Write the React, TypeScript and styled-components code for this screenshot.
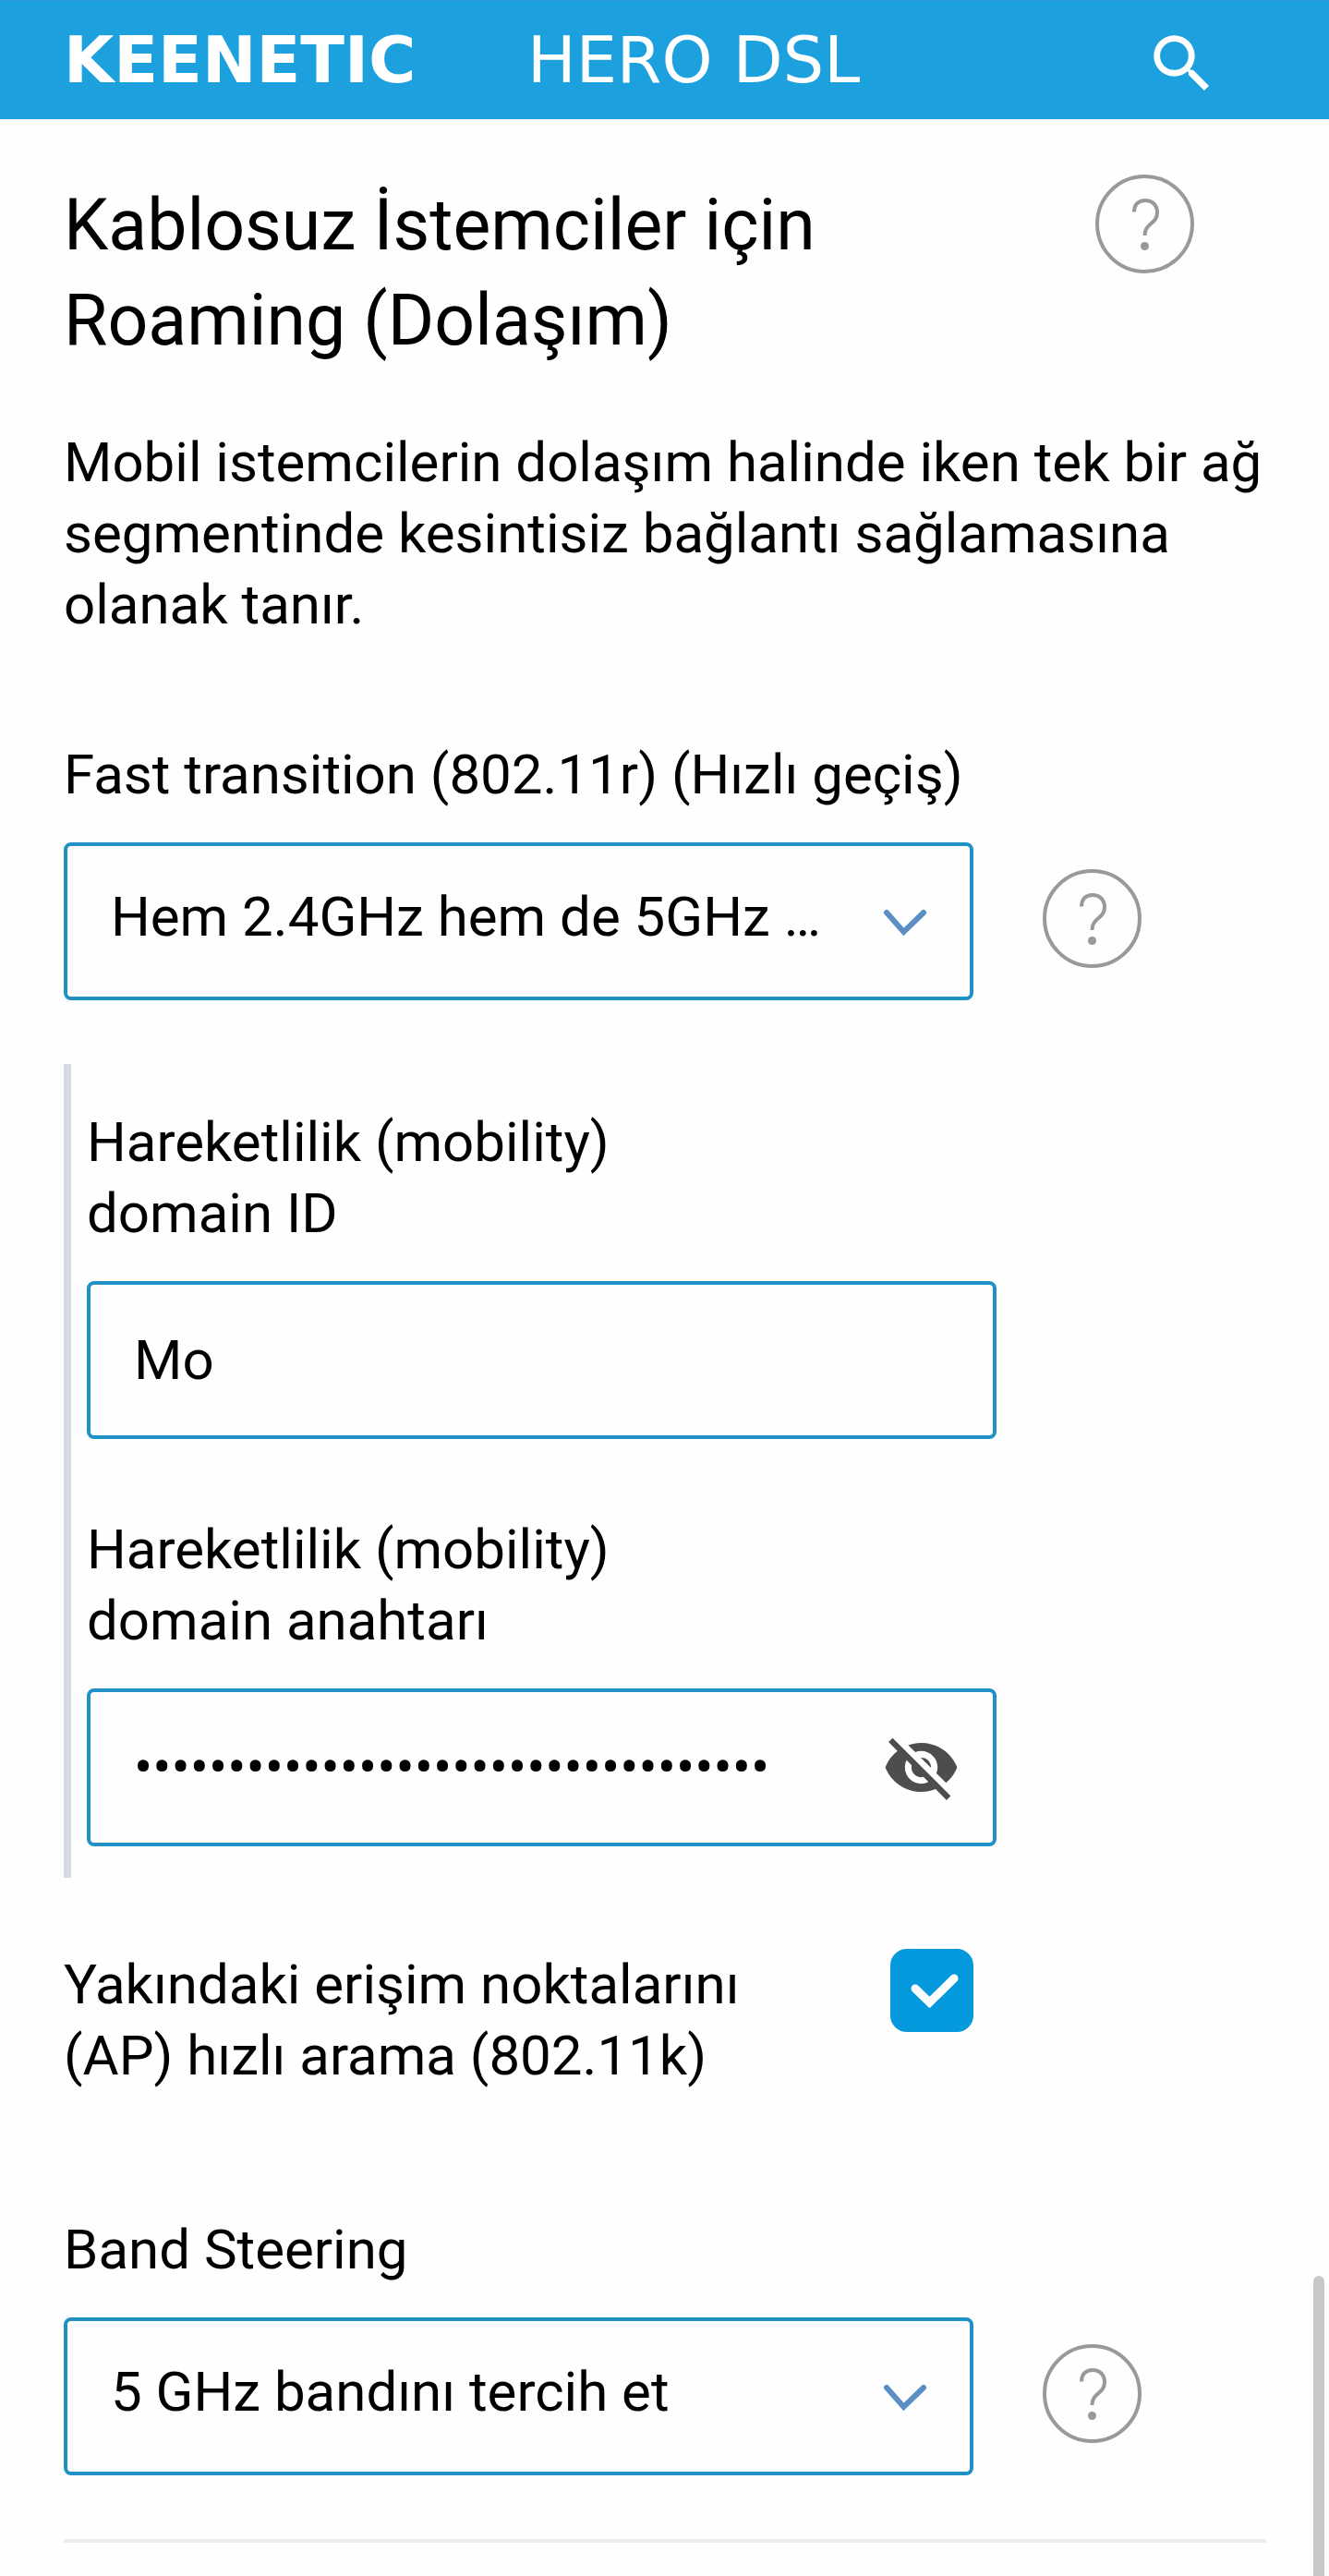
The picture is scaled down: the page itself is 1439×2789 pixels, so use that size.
import React, { useState } from "react";
import styled, { createGlobalStyle } from "styled-components";
import { MdSearch, MdVisibilityOff, MdVisibility } from "react-icons/md";

const GlobalStyle = createGlobalStyle`
  *, *::before, *::after { box-sizing: border-box; }
  html { scrollbar-width: none; }
  body {
    margin: 0;
    background: #fefefe;
    color: #000;
    font-family: Roboto, "Liberation Sans", sans-serif;
    font-size: 60px;
    line-height: 77px;
  }
`;

const Header = styled.header`
  display: flex;
  align-items: center;
  justify-content: space-between;
  height: 129px;
  padding: 0 118px 0 69px;
  background: #1ca0de;
  border-top: 1px solid #2e97d2;
`;

const Brand = styled.a`
  display: grid;
  grid-template-columns: 502px auto;
  color: #fff;
  font-family: "DejaVu Sans", Roboto, sans-serif;
  font-size: 70px;
  text-decoration: none;
  white-space: nowrap;
`;

const Maker = styled.span`
  font-weight: 700;
`;

const Model = styled.span`
  font-weight: 400;
`;

const IconButton = styled.button`
  display: flex;
  flex: none;
  padding: 0;
  border: 0;
  background: none;
  color: inherit;
  cursor: pointer;
`;

const SearchButton = styled(IconButton)`
  padding-top: 8px;
  color: #fff;
`;

const HelpCircle = styled(IconButton)`
  padding-bottom: 6px;
`;

const RevealButton = styled(IconButton)`
  position: absolute;
  top: 43px;
  right: 39px;
  color: #4d4d4d;
`;

const Main = styled.main`
  padding: 60px 68px 35px 69px;
`;

const TitleRow = styled.div`
  display: flex;
  align-items: flex-start;
  justify-content: space-between;
  gap: 75px;
  padding-right: 78px;
`;

const Title = styled.h1`
  margin: 0;
  padding-top: 4px;
  font-size: 77px;
  font-weight: 400;
  line-height: 103px;
`;

const Description = styled.p`
  margin: 63px 0 107px;
`;

const Field = styled.div`
  display: flex;
  flex-direction: column;
  gap: 35px;
`;

const Label = styled.label`
  max-width: 740px;
`;

const WideLabel = styled.label``;

const ControlRow = styled.div`
  display: flex;
  align-items: center;
  gap: 75px;
`;

const ControlBox = styled.div`
  position: relative;
  width: 100%;
  max-width: 985px;
`;

const Select = styled.select`
  display: block;
  width: 100%;
  height: 171px;
  padding: 0 130px 10px 47px;
  border: 4px solid #1f91c4;
  border-radius: 8px;
  background: #fefefe;
  color: #000;
  font: inherit;
  appearance: none;
  text-overflow: ellipsis;
`;

const Input = styled.input`
  display: block;
  width: 100%;
  height: 171px;
  padding: 0 130px 0 47px;
  border: 4px solid #1f91c4;
  border-radius: 8px;
  background: #fefefe;
  color: #000;
  font: inherit;
`;

const Chevron = styled.svg`
  position: absolute;
  top: 71px;
  right: 49px;
  width: 51px;
  height: 32px;
  pointer-events: none;
`;

const DomainGroup = styled.section`
  display: flex;
  flex-direction: column;
  gap: 81px;
  margin: 69px 0 77px;
  padding: 46px 0 34px 17px;
  border-left: 8px solid #d6dbe3;
`;

const CheckRow = styled.div`
  display: flex;
  align-items: flex-start;
  gap: 75px;
  max-width: 985px;
  margin-bottom: 133px;
`;

const CheckLabel = styled.label`
  flex: 1;
`;

const CheckWrap = styled.span`
  display: grid;
  flex: none;
`;

const Checkbox = styled.input`
  grid-area: 1 / 1;
  width: 90px;
  height: 90px;
  margin: 0;
  border: 4px solid #0498dc;
  border-radius: 18px;
  background: #fefefe;
  appearance: none;

  &:checked {
    background: #0498dc;
  }
`;

const CheckMark = styled.svg`
  grid-area: 1 / 1;
  width: 90px;
  height: 90px;
  pointer-events: none;
`;

const Divider = styled.hr`
  height: 4px;
  margin: 69px 0 0;
  border: 0;
  background: #eceeee;
`;

const ScrollThumb = styled.div`
  position: fixed;
  right: 5px;
  bottom: 0;
  width: 12px;
  height: 325px;
  border-radius: 6px 6px 0 0;
  background: #c8c8c8;
`;

function HelpButton({ topic }: { topic: string }) {
  return (
    <HelpCircle type="button" aria-label={topic}>
      <svg width="107" height="107" viewBox="0 0 107 107" fill="none">
        <circle cx="53.5" cy="53.5" r="51.5" stroke="#999" strokeWidth="4" />
        <path
          d="M42 40.500C42 32.500 46.500 28 54 28S67 33 67 41C67 54 53.500 52 53.500 66"
          stroke="#999"
          strokeWidth="4"
        />
        <circle cx="53.5" cy="77.5" r="4.5" fill="#999" />
      </svg>
    </HelpCircle>
  );
}

function DownChevron() {
  return (
    <Chevron viewBox="0 0 51 32" fill="none" aria-hidden="true">
      <path d="M6 5L24.500 26L46 5" stroke="#5b8fc4" strokeWidth="6" strokeLinecap="round" />
    </Chevron>
  );
}

export default function App() {
  const [domainId, setDomainId] = useState("Mo");
  const [domainKey, setDomainKey] = useState("k".repeat(34));
  const [revealed, setRevealed] = useState(false);
  const [nearby, setNearby] = useState(true);

  return (
    <>
      <GlobalStyle />
      <Header>
        <Brand href="#">
          <Maker>KEENETIC</Maker>
          <Model>HERO DSL</Model>
        </Brand>
        <SearchButton type="button" aria-label="Ara">
          <MdSearch size={82} />
        </SearchButton>
      </Header>

      <Main>
        <TitleRow>
          <Title>Kablosuz İstemciler için Roaming (Dolaşım)</Title>
          <HelpButton topic="Roaming" />
        </TitleRow>
        <Description>
          Mobil istemcilerin dolaşım halinde iken tek bir ağ segmentinde kesintisiz bağlantı
          sağlamasına olanak tanır.
        </Description>

        <Field>
          <WideLabel htmlFor="fast-transition">Fast transition (802.11r) (Hızlı geçiş)</WideLabel>
          <ControlRow>
            <ControlBox>
              <Select id="fast-transition">
                <option>Hem 2.4GHz hem de 5GHz …</option>
              </Select>
              <DownChevron />
            </ControlBox>
            <HelpButton topic="Fast transition" />
          </ControlRow>
        </Field>

        <DomainGroup>
          <Field>
            <Label htmlFor="domain-id">Hareketlilik (mobility) domain ID</Label>
            <ControlBox>
              <Input
                id="domain-id"
                type="text"
                value={domainId}
                onChange={(e) => setDomainId(e.target.value)}
              />
            </ControlBox>
          </Field>
          <Field>
            <Label htmlFor="domain-key">Hareketlilik (mobility) domain anahtarı</Label>
            <ControlBox>
              <Input
                id="domain-key"
                type={revealed ? "text" : "password"}
                value={domainKey}
                onChange={(e) => setDomainKey(e.target.value)}
              />
              <RevealButton
                type="button"
                aria-label="Anahtarı göster"
                onClick={() => setRevealed(!revealed)}
              >
                {revealed ? <MdVisibility size={85} /> : <MdVisibilityOff size={85} />}
              </RevealButton>
            </ControlBox>
          </Field>
        </DomainGroup>

        <CheckRow>
          <CheckLabel htmlFor="nearby">
            Yakındaki erişim noktalarını (AP) hızlı arama (802.11k)
          </CheckLabel>
          <CheckWrap>
            <Checkbox
              id="nearby"
              type="checkbox"
              checked={nearby}
              onChange={(e) => setNearby(e.target.checked)}
            />
            <CheckMark viewBox="0 0 90 90" fill="none" aria-hidden="true">
              <path
                d="M27 43L42.500 58L69 32"
                stroke="#fff"
                strokeWidth="9"
                strokeLinecap="round"
              />
            </CheckMark>
          </CheckWrap>
        </CheckRow>

        <Field>
          <WideLabel htmlFor="band-steering">Band Steering</WideLabel>
          <ControlRow>
            <ControlBox>
              <Select id="band-steering">
                <option>5 GHz bandını tercih et</option>
              </Select>
              <DownChevron />
            </ControlBox>
            <HelpButton topic="Band Steering" />
          </ControlRow>
        </Field>
        <Divider />
      </Main>
      <ScrollThumb />
    </>
  );
}
